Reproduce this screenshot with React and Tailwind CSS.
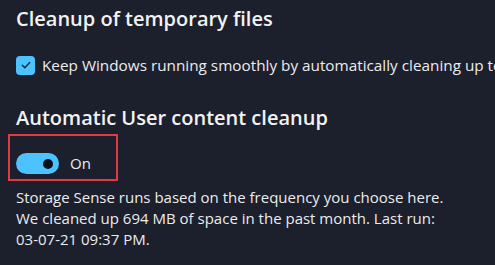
export default function App() {
  return (
    <div
      className="w-[495px] h-[265px] overflow-hidden bg-[#1c1f2c] text-[#ececec]"
      style={{ fontFamily: '"Open Sans", "Noto Sans", sans-serif' }}
    >
      <div className="pl-4 pt-[4px]">
        <h1 className="text-[20px] leading-[30px] font-semibold text-[#f2f2f2]">Cleanup of temporary files</h1>
      </div>
      <div className="flex items-center pl-4 mt-[21px] h-[20px] whitespace-nowrap overflow-hidden">
        <div className="w-[19px] h-[19px] rounded-[4px] bg-[#4cc2ff] flex items-center justify-center shrink-0">
          <svg width="12" height="12" viewBox="0 0 12 12" fill="none">
            <path d="M2.3 6.3 L4.8 8.7 L9.7 3.6" stroke="#1c2a4a" strokeWidth="1.5" strokeLinecap="round" strokeLinejoin="round" />
          </svg>
        </div>
        <span className="ml-[7px] text-[15.3px]">Keep Windows running smoothly by automatically cleaning up temporary files</span>
      </div>
      <div className="pl-4 mt-[29px]">
        <h2 className="text-[20px] leading-[28px] font-semibold text-[#f2f2f2]">Automatic User content cleanup</h2>
      </div>
      <div className="ml-2 mt-[2px] w-[110px] h-[47px] border-2 border-[#e23a40] flex items-center pl-[6px]">
        <div className="w-[43px] h-[21px] rounded-full bg-[#4cc2ff] flex items-center justify-end pr-[6px] mt-[12px]">
          <div className="w-[10px] h-[10px] rounded-full bg-[#0b0f1a]" />
        </div>
        <span className="ml-[11px] text-[15px] mt-[12px]">On</span>
      </div>
      <div className="pl-4 mt-[6px] text-[15px] leading-[21px]">
        <p>Storage Sense runs based on the frequency you choose here.</p>
        <p>We cleaned up 694 MB of space in the past month. Last run:</p>
        <p>03-07-21 09:37 PM.</p>
      </div>
    </div>
  );
}
